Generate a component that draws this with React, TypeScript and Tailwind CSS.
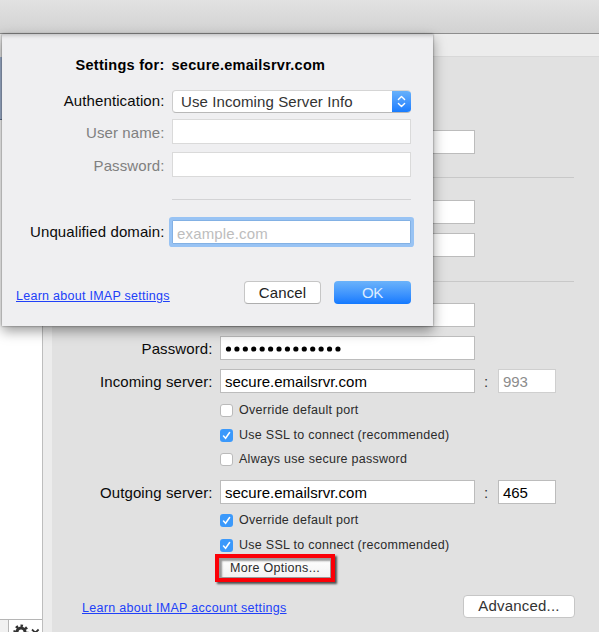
import React from "react";

const Label = ({ children, muted = false }: { children: React.ReactNode; muted?: boolean }) => (
  <span className={muted ? "text-right text-[#808080]" : "text-right text-[#0a0a0a]"}>{children}</span>
);

const Field = ({ children }: { children?: React.ReactNode }) => (
  <div className="flex h-6 w-[255px] shrink-0 items-center border border-[#bcbcbc] bg-white pl-1 pt-[3px] tracking-[0.01px] text-black">
    {children}
  </div>
);

const Row = ({ label, children }: { label?: string; children?: React.ReactNode }) => (
  <div className="flex h-6 items-center">
    <div className="mr-[7.5px] w-[160.5px] shrink-0 pt-0.5 text-right">{label && <Label>{label}</Label>}</div>
    {children}
  </div>
);

const Port = ({ value, muted = false }: { value: string; muted?: boolean }) => (
  <>
    <span className="ml-[9px] w-[14px] pt-0.5 text-[#333]">:</span>
    <div
      className={
        muted
          ? "flex h-6 w-[58px] items-center border border-[#cfcfcf] bg-white pl-1 pt-[3px] tracking-[-0.1px] text-[#8c8c8c]"
          : "flex h-6 w-[58px] items-center border border-[#bcbcbc] bg-white pl-1 pt-[3px] tracking-[-0.1px] text-black"
      }
    >
      {value}
    </div>
  </>
);

const Check = ({ label, on = false }: { label: string; on?: boolean }) => (
  <div className="ml-[168px] flex h-[13px] items-center gap-[6px] text-[12.5px] tracking-[0.27px] text-[#2b2b2b]">
    {on ? (
      <span className="flex h-[13px] w-[13px] items-center justify-center rounded-[3px] bg-[#3b99fb]">
        <svg width="13" height="13" viewBox="0 0 13 13" fill="none">
          <path d="M3.5 7 5.6 9.3 9.6 3.5" stroke="#fff" strokeWidth="1.5" strokeLinecap="round" />
        </svg>
      </span>
    ) : (
      <span className="h-[13px] w-[13px] rounded-[3px] border border-[#bababa] bg-white" />
    )}
    <span className="leading-[13px]">{label}</span>
  </div>
);

const Dots = () => (
  <svg width="120" height="8" viewBox="0 0 120 8" className="-mt-px">
    {Array.from({ length: 14 }, (_, i) => (
      <circle key={i} cx={3.5 + i * 8.42} cy="4" r="2.6" fill="#000" />
    ))}
  </svg>
);

const Gear = () => (
  <svg width="16" height="16" viewBox="0 0 16 16" fill="none" stroke="#333">
    <circle cx="8" cy="8" r="4" strokeWidth="3" />
    <circle cx="8" cy="8" r="6.3" strokeWidth="2.6" strokeDasharray="2.47 2.47" strokeDashoffset="1.2" />
  </svg>
);

const DialogRow = ({ label, muted, children }: { label: string; muted?: boolean; children: React.ReactNode }) => (
  <div className="flex h-6 items-center">
    <div className={muted ? "mr-[7.5px] w-[162.5px] shrink-0 pt-1 text-right" : "mr-[7.5px] w-[162.5px] shrink-0 pt-0.5 text-right"}>
      <Label muted={muted}>{label}</Label>
    </div>
    {children}
  </div>
);

const SettingsDialog = () => (
  <section className="absolute left-[2px] top-[34px] flex h-[292px] w-[431px] flex-col bg-[#efeff1] shadow-[0_5px_12px_rgba(0,0,0,0.4),0_0_2px_rgba(0,0,0,0.45),inset_0_5px_4px_-4px_rgba(0,0,0,0.25)]">
    <div className="mt-[19px] flex h-6 items-center pt-px text-[14.5px] font-bold tracking-[0.27px] text-black">
      <span className="mr-[7px] w-[162.5px] text-right">Settings for:</span>
      <span>secure.emailsrvr.com</span>
    </div>
    <div className="mt-[11.5px]">
      <DialogRow label="Authentication:">
        <div className="mt-[1px] flex h-[23px] w-[239px] overflow-hidden rounded-[4px] border border-b-[#b8b8b8] border-l-[#ccc] border-r-0 border-t-[#d5d5d5] bg-white">
          <span className="flex-1 pl-2 leading-[21px] tracking-[0.1px] text-[#333]">Use Incoming Server Info</span>
          <span className="-my-px flex w-[19px] items-center justify-center bg-gradient-to-b from-[#6bb3fa] to-[#1179ff]">
            <svg width="9" height="13" viewBox="0 0 9 13" fill="none" stroke="#fff" strokeWidth="1.4" strokeLinecap="round" strokeLinejoin="round">
              <path d="M1.4 4.4 4.5 1.4 7.6 4.4M1.4 8.6 4.5 11.6 7.6 8.6" />
            </svg>
          </span>
        </div>
      </DialogRow>
    </div>
    <div className="mt-[7px]">
      <DialogRow label="User name:" muted>
        <div className="h-[25px] w-[239px] shrink-0 border border-[#dadada] bg-white" />
      </DialogRow>
    </div>
    <div className="mt-[9px]">
      <DialogRow label="Password:" muted>
        <div className="h-[25px] w-[239px] shrink-0 border border-[#dadada] bg-white" />
      </DialogRow>
    </div>
    <div className="ml-[170px] mt-[22px] h-px w-[239px] bg-[#d3d3d5]" />
    <div className="mt-5">
      <DialogRow label="Unqualified domain:">
        <div className="h-6 w-[239px] rounded-[1px] border border-[#83b1e4] bg-white pl-1 leading-[25px] tracking-[0.15px] text-[#bdbdbd] shadow-[0_0_0_3px_#98c3f4]">
          example.com
        </div>
      </DialogRow>
    </div>
    <div className="mt-[37px] flex h-6 items-center pl-[14px]">
      <a className="mt-[7px] w-[228px] text-[12.5px] tracking-[0.27px] text-[#2040f8] underline">Learn about IMAP settings</a>
      <button className="h-[23px] w-[77px] rounded-[4px] border border-[#c6c6c6] border-b-[#aeaeae] bg-white leading-[21px] text-[#222]">Cancel</button>
      <button className="ml-[13px] h-[23px] w-[77px] rounded-[4px] bg-gradient-to-b from-[#6bb3fa] to-[#1179ff] leading-[23px] tracking-[-0.3px] text-[#dcecff]">OK</button>
    </div>
  </section>
);

export default function App() {
  return (
    <main
      className="relative flex h-[632px] w-[599px] flex-col overflow-hidden bg-[#ececec] text-[15px] tracking-[0.1px]"
      style={{ fontFamily: '"Liberation Sans", Arial, sans-serif' }}
    >
      <header className="h-[34px] shrink-0 border-b border-[#8d8d8d] bg-gradient-to-b from-[#e2e2e2] to-[#d2d2d2]" />
      <div className="flex min-h-0 flex-1">
        <aside className="flex w-[43px] shrink-0 flex-col border-r border-[#bdbdbd] bg-white">
          <div className="h-[23px] bg-[#ececec]" />
          <div className="h-[63px] border-b border-[#64748f] bg-[#a3b4d2]" />
          <div className="flex-1" />
          <div className="flex h-[13px] shrink-0 overflow-hidden border-t border-[#b5b5b5] bg-[#f1f1f1]">
            <div className="w-[9px] shrink-0 border-r border-[#b5b5b5]" />
            <div className="flex flex-1 bg-white pl-[4px] pt-[4px]">
              <Gear />
              <svg width="9" height="8" viewBox="0 0 9 8" fill="none" className="ml-0.5 mt-[4px]">
                <path d="M1 1.5 4.3 4.8 7.6 1.5" stroke="#333" strokeWidth="1.8" />
              </svg>
            </div>
          </div>
        </aside>
        <section className="ml-[9px] mt-[22px] flex flex-1 flex-col border-t border-[#d8d8d8] bg-[#e1e1e1] pt-[73px]">
          <Row><Field /></Row>
          <div className="mt-[23px] h-px w-[522px] bg-[#c8c8c8]" />
          <div className="mt-[22px]"><Row><Field /></Row></div>
          <div className="mt-[9px]"><Row><Field /></Row></div>
          <div className="mt-6 h-px w-[522px] bg-[#c8c8c8]" />
          <div className="mt-[21px]"><Row><Field /></Row></div>
          <div className="mt-[9px]"><Row label="Password:"><Field><Dots /></Field></Row></div>
          <div className="mt-[9px]">
            <Row label="Incoming server:">
              <Field>secure.emailsrvr.com</Field>
              <Port value="993" muted />
            </Row>
          </div>
          <div className="mt-[11px] flex flex-col gap-[11.5px]">
            <Check label="Override default port" />
            <Check label="Use SSL to connect (recommended)" on />
            <Check label="Always use secure password" />
          </div>
          <div className="mt-[14px]">
            <Row label="Outgoing server:">
              <Field>secure.emailsrvr.com</Field>
              <Port value="465" />
            </Row>
          </div>
          <div className="mt-[10px] flex flex-col gap-[11.5px]">
            <Check label="Override default port" on />
            <Check label="Use SSL to connect (recommended)" on />
          </div>
          <div className="ml-[163px] mt-[2.5px] h-[28px] w-[120px] border-4 border-[#fb0007] shadow-[2px_2px_2px_rgba(0,0,0,0.65)]">
            <div className="h-full border border-[#999] bg-gradient-to-b from-white to-[#f2f2f2] pl-[10px] text-[12.5px] leading-[19px] tracking-[0.3px] text-[#2b2b2b] shadow-[inset_2px_2px_2px_rgba(0,0,0,0.4)]">
              More Options...
            </div>
          </div>
          <div className="mt-[12px] flex h-6 items-center pl-[30px]">
            <a className="mt-[5px] w-[381px] text-[12.5px] tracking-[0.31px] text-[#2040f8] underline">Learn about IMAP account settings</a>
            <button className="h-[23px] w-[112px] rounded-[4px] border border-[#c6c6c6] bg-white leading-[20px] tracking-[0.2px] text-[#333]">Advanced...</button>
          </div>
        </section>
      </div>
      <SettingsDialog />
    </main>
  );
}
